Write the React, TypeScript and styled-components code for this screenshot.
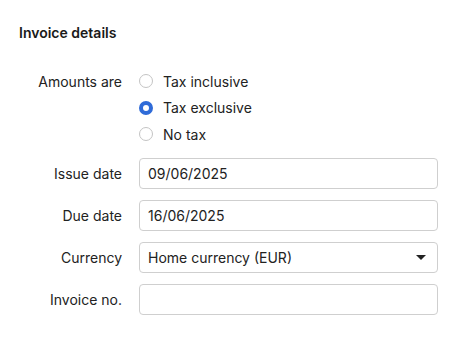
import React from "react";
import styled, { createGlobalStyle } from "styled-components";

const Global = createGlobalStyle`
  html, body { margin: 0; padding: 0; background: #fff; }
  body { font-family: Inter, "Noto Sans", sans-serif; color: #1f1f1f; -webkit-font-smoothing: antialiased; }
`;

const Page = styled.div`
  width: 464px;
  height: 337px;
  box-sizing: border-box;
  padding-top: 24px;
`;

const Title = styled.h2`
  margin: 0 0 0 19px;
  font-size: 14px;
  line-height: 18px;
  font-weight: 600;
  color: #1a1a1a;
`;

const Form = styled.div`
  display: grid;
  grid-template-columns: 122px 299px;
  column-gap: 17px;
  row-gap: 11px;
  margin-top: 30px;
`;

const Label = styled.div<{ $top?: boolean }>`
  font-size: 14px;
  text-align: right;
  color: #222;
  align-self: ${(p) => (p.$top ? "start" : "center")};
  line-height: 18px;
  padding-top: ${(p) => (p.$top ? "1px" : "0")};
`;

const RadioGroup = styled.div`
  display: flex;
  flex-direction: column;
  gap: 8.5px;
  margin-bottom: 4px;
`;

const RadioRow = styled.label`
  display: flex;
  align-items: center;
  gap: 10px;
  font-size: 14px;
  height: 18px;
  color: #222;
`;

const Circle = styled.span<{ $on?: boolean }>`
  width: 14px;
  height: 14px;
  box-sizing: border-box;
  border-radius: 50%;
  border: ${(p) => (p.$on ? "4px solid #2f6bd8" : "1.5px solid #c4c4c4")};
  background: #fff;
  flex: none;
`;

const Field = styled.div`
  height: 31px;
  box-sizing: border-box;
  border: 1px solid #cfcfcf;
  border-radius: 4px;
  display: flex;
  align-items: center;
  padding: 0 11px 0 8px;
  font-size: 14px;
  color: #222;
`;

const Value = styled.span`
  flex: 1;
`;

const Caret = styled.span`
  width: 0;
  height: 0;
  border-left: 5px solid transparent;
  border-right: 5px solid transparent;
  border-top: 5px solid #222;
`;

export default function App() {
  return (
    <Page>
      <Global />
      <Title>Invoice details</Title>
      <Form>
        <Label $top>Amounts are</Label>
        <RadioGroup>
          <RadioRow><Circle />Tax inclusive</RadioRow>
          <RadioRow><Circle $on />Tax exclusive</RadioRow>
          <RadioRow><Circle />No tax</RadioRow>
        </RadioGroup>
        <Label>Issue date</Label>
        <Field><Value>09/06/2025</Value></Field>
        <Label>Due date</Label>
        <Field><Value>16/06/2025</Value></Field>
        <Label>Currency</Label>
        <Field><Value>Home currency (EUR)</Value><Caret /></Field>
        <Label>Invoice no.</Label>
        <Field><Value></Value></Field>
      </Form>
    </Page>
  );
}
